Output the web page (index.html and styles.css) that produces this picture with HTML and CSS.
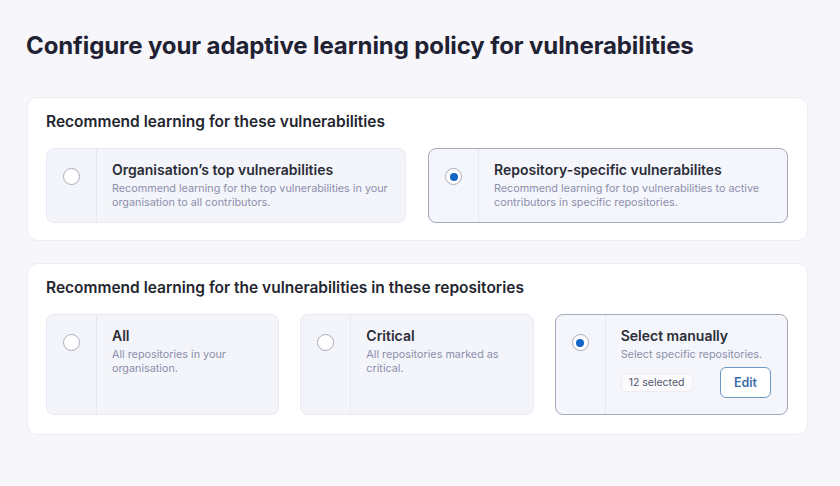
FILE: index.html
```html
<!DOCTYPE html>
<html lang="en">
<head>
<meta charset="utf-8">
<title>Adaptive learning policy</title>
<link rel="stylesheet" href="styles.css">
</head>
<body>
<main class="page">
  <h1 class="page-title">Configure your adaptive learning policy for vulnerabilities</h1>

  <section class="panel">
    <h2 class="panel-title">Recommend learning for these vulnerabilities</h2>
    <div class="options options-2">
      <label class="option">
        <span class="option-radio"><span class="radio"></span></span>
        <span class="option-body">
          <span class="option-title">Organisation’s top vulnerabilities</span>
          <span class="option-desc">Recommend learning for the top vulnerabilities in your organisation to all contributors.</span>
        </span>
      </label>
      <label class="option is-selected">
        <span class="option-radio"><span class="radio radio-on"></span></span>
        <span class="option-body">
          <span class="option-title">Repository-specific vulnerabilites</span>
          <span class="option-desc">Recommend learning for top vulnerabilities to active contributors in specific repositories.</span>
        </span>
      </label>
    </div>
  </section>

  <section class="panel">
    <h2 class="panel-title">Recommend learning for the vulnerabilities in these repositories</h2>
    <div class="options options-3">
      <label class="option">
        <span class="option-radio"><span class="radio"></span></span>
        <span class="option-body">
          <span class="option-title">All</span>
          <span class="option-desc">All repositories in your<br>organisation.</span>
        </span>
      </label>
      <label class="option">
        <span class="option-radio"><span class="radio"></span></span>
        <span class="option-body">
          <span class="option-title">Critical</span>
          <span class="option-desc">All repositories marked as<br>critical.</span>
        </span>
      </label>
      <label class="option is-selected">
        <span class="option-radio"><span class="radio radio-on"></span></span>
        <span class="option-body">
          <span class="option-title">Select manually</span>
          <span class="option-desc">Select specific repositories.</span>
          <span class="option-actions">
            <span class="count-badge">12 selected</span>
            <button class="edit-btn" type="button">Edit</button>
          </span>
        </span>
      </label>
    </div>
  </section>
</main>
</body>
</html>
```
FILE: styles.css
```css
* {
  box-sizing: border-box;
}

html,
body {
  margin: 0;
  background: #f6f6fb;
}

body {
  font-family: Inter, "Noto Sans", "Liberation Sans", sans-serif;
  color: #262836;
  width: 840px;
  height: 486px;
  overflow: hidden;
}

.page {
  padding: 32px 32px 0 27px;
}

.page-title {
  margin: 0 0 37px -1px;
  font-size: 24px;
  line-height: 28px;
  font-weight: 700;
  color: #1f2233;
  letter-spacing: -0.1px;
}

.panel {
  width: 781px;
  background: #ffffff;
  border: 1px solid #ececf3;
  border-radius: 10px;
  padding: 15px 19px 17px 18px;
  margin-bottom: 22px;
}

.panel:last-child {
  padding-bottom: 19px;
}

.panel-title {
  margin: 0 0 17px;
  font-size: 15.5px;
  line-height: 18px;
  font-weight: 600;
  color: #24262f;
}

.options {
  display: grid;
  gap: 21px;
}

.options-2 {
  grid-template-columns: 1fr 1fr;
  gap: 22px;
}

.options-3 {
  grid-template-columns: 1fr 1fr 1fr;
}

.option {
  display: flex;
  background: #f4f5fa;
  border: 1px solid #e8e9f2;
  border-radius: 8px;
  cursor: pointer;
}

.option.is-selected {
  background: #f5f6fb;
  border-color: #a5a9ba;
}

.option-radio {
  flex: 0 0 50px;
  border-right: 1px solid #e7e8f0;
  display: flex;
  justify-content: center;
  align-items: flex-start;
  padding-top: 19px;
}

.radio {
  width: 17px;
  height: 17px;
  border-radius: 50%;
  border: 1.5px solid #a9abb9;
  background: #ffffff;
  display: flex;
  align-items: center;
  justify-content: center;
}

.radio-on::after {
  content: "";
  width: 8px;
  height: 8px;
  border-radius: 50%;
  background: #1565c8;
}

.option-body {
  flex: 1;
  display: flex;
  flex-direction: column;
  padding: 12px 16px 12px 15px;
}

.option-title {
  font-size: 14px;
  line-height: 18px;
  font-weight: 600;
  color: #2a2c38;
}

.option-desc {
  margin-top: 3px;
  font-size: 10.8px;
  line-height: 14px;
  color: #8b8fad;
}

.option-actions {
  display: flex;
  justify-content: space-between;
  align-items: center;
  margin: 5px 0 4px;
}

.count-badge {
  height: 19px;
  display: inline-flex;
  align-items: center;
  padding: 0 7px;
  background: #fbfbfd;
  border: 1px solid #ececf2;
  border-radius: 4px;
  font-size: 10.5px;
  color: #53566a;
}

.edit-btn {
  width: 51px;
  height: 31px;
  background: #ffffff;
  border: 1.5px solid #6e98c6;
  border-radius: 6px;
  font-family: inherit;
  font-size: 12.5px;
  font-weight: 600;
  color: #3b6ea8;
  cursor: pointer;
}
```
